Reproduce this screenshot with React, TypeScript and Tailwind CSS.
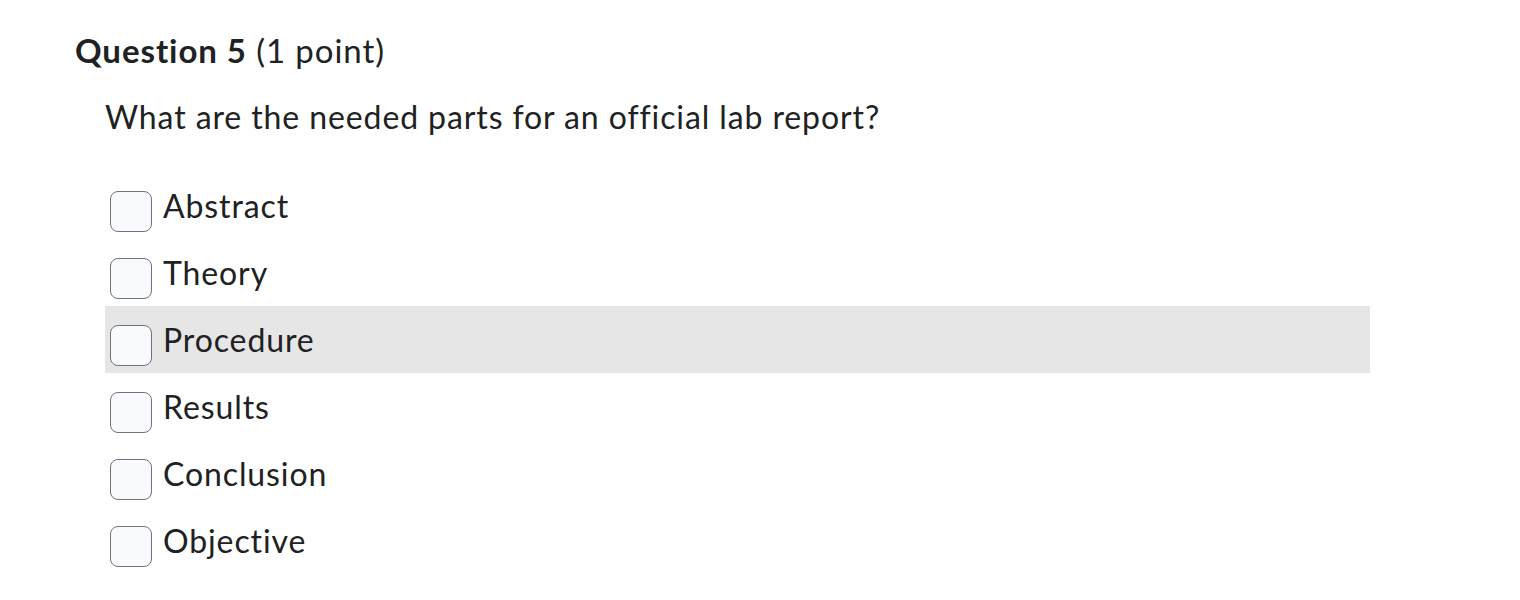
import { useState } from "react";

const options = ["Abstract", "Theory", "Procedure", "Results", "Conclusion", "Objective"];

export default function App() {
    const [checked, setChecked] = useState<Record<string, boolean>>({});
    const hovered = "Procedure";

    return (
        <div className="min-h-screen bg-white text-[#202122]" style={{ fontFamily: "Lato, 'Noto Sans', sans-serif" }}>
            <div className="pl-[75px] pt-[30px]">
                {/* Header */}
                <h2 className="text-[33px] leading-[40px] tracking-[0.028em]">
                    <span className="font-bold">Question 5</span> (1 point)
                </h2>

                <div className="pl-[30px] pt-[27px]">
                    <p className="text-[32px] leading-[40px] tracking-[0.028em]">
                        What are the needed parts for an official lab report?
                    </p>

                    {/* Options */}
                    <div className="mt-[35px] w-[1265px]">
                        {options.map((opt) => (
                            <label
                                key={opt}
                                className={`flex h-[67px] cursor-pointer items-center gap-[11px] pl-[5px] ${
                                    opt === hovered ? "bg-[#e6e6e6]" : ""
                                }`}
                            >
                                <input
                                    type="checkbox"
                                    className="sr-only"
                                    checked={!!checked[opt]}
                                    onChange={() => setChecked({ ...checked, [opt]: !checked[opt] })}
                                />
                                <span className="mt-[12px] h-[41px] w-[42px] shrink-0 rounded-[8px] border border-[#6e7477] bg-[#f9fafe]" />
                                <span className="text-[32px] leading-[40px] tracking-[0.028em]">{opt}</span>
                            </label>
                        ))}
                    </div>
                </div>
            </div>
        </div>
    );
}
